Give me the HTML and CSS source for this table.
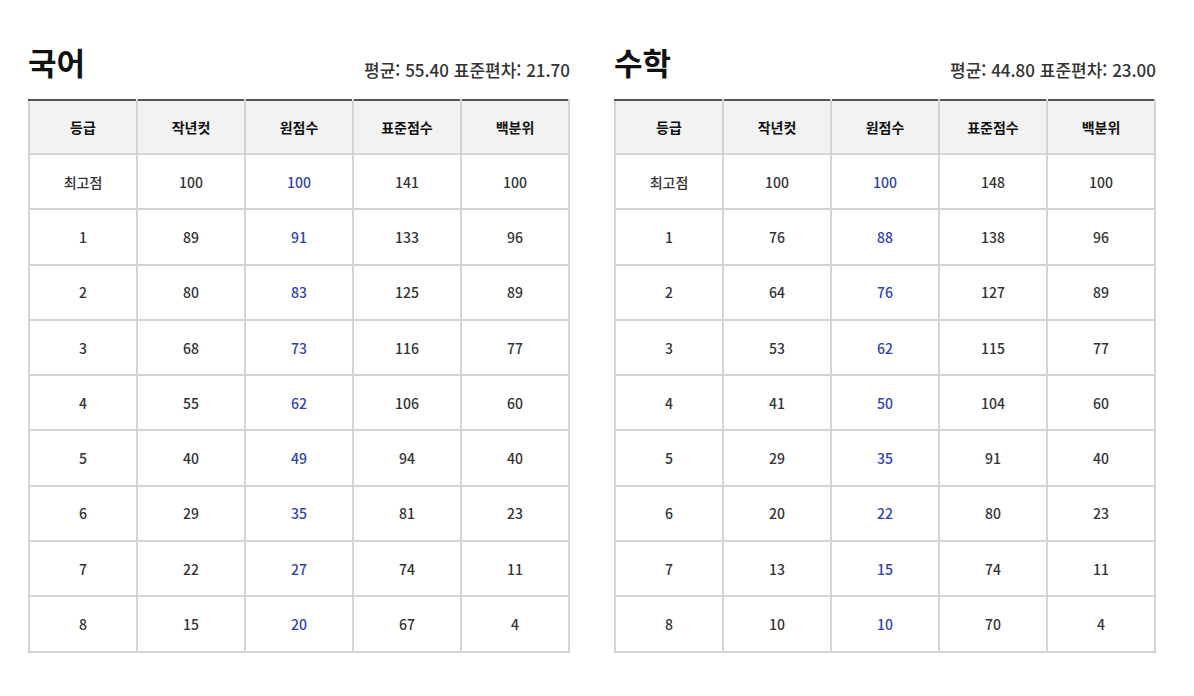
FILE: index.html
```html
<!DOCTYPE html>
<html lang="ko">
<head>
<meta charset="utf-8">
<link rel="stylesheet" href="styles.css">
</head>
<body>
<div class="page">
  <section class="panel">
    <div class="panel-head">
      <h2 class="title">국어</h2>
      <span class="stats">평균: 55.40 표준편차: 21.70</span>
    </div>
    <table class="grade-table">
      <thead>
        <tr><th>등급</th><th>작년컷</th><th>원점수</th><th>표준점수</th><th>백분위</th></tr>
      </thead>
      <tbody>
        <tr><td>최고점</td><td>100</td><td class="raw">100</td><td>141</td><td>100</td></tr>
        <tr><td>1</td><td>89</td><td class="raw">91</td><td>133</td><td>96</td></tr>
        <tr><td>2</td><td>80</td><td class="raw">83</td><td>125</td><td>89</td></tr>
        <tr><td>3</td><td>68</td><td class="raw">73</td><td>116</td><td>77</td></tr>
        <tr><td>4</td><td>55</td><td class="raw">62</td><td>106</td><td>60</td></tr>
        <tr><td>5</td><td>40</td><td class="raw">49</td><td>94</td><td>40</td></tr>
        <tr><td>6</td><td>29</td><td class="raw">35</td><td>81</td><td>23</td></tr>
        <tr><td>7</td><td>22</td><td class="raw">27</td><td>74</td><td>11</td></tr>
        <tr><td>8</td><td>15</td><td class="raw">20</td><td>67</td><td>4</td></tr>
      </tbody>
    </table>
  </section>
  <section class="panel">
    <div class="panel-head">
      <h2 class="title">수학</h2>
      <span class="stats">평균: 44.80 표준편차: 23.00</span>
    </div>
    <table class="grade-table">
      <thead>
        <tr><th>등급</th><th>작년컷</th><th>원점수</th><th>표준점수</th><th>백분위</th></tr>
      </thead>
      <tbody>
        <tr><td>최고점</td><td>100</td><td class="raw">100</td><td>148</td><td>100</td></tr>
        <tr><td>1</td><td>76</td><td class="raw">88</td><td>138</td><td>96</td></tr>
        <tr><td>2</td><td>64</td><td class="raw">76</td><td>127</td><td>89</td></tr>
        <tr><td>3</td><td>53</td><td class="raw">62</td><td>115</td><td>77</td></tr>
        <tr><td>4</td><td>41</td><td class="raw">50</td><td>104</td><td>60</td></tr>
        <tr><td>5</td><td>29</td><td class="raw">35</td><td>91</td><td>40</td></tr>
        <tr><td>6</td><td>20</td><td class="raw">22</td><td>80</td><td>23</td></tr>
        <tr><td>7</td><td>13</td><td class="raw">15</td><td>74</td><td>11</td></tr>
        <tr><td>8</td><td>10</td><td class="raw">10</td><td>70</td><td>4</td></tr>
      </tbody>
    </table>
  </section>
</div>
</body>
</html>
```

FILE: styles.css
```css
html, body {
  margin: 0;
  padding: 0;
  background: #ffffff;
}
body {
  font-family: "Noto Sans CJK KR", "Noto Sans", sans-serif;
  color: #222;
}
.page {
  display: flex;
  gap: 44px;
  padding: 40px 0 0 28px;
}
.panel {
  width: 542px;
}
.panel-head {
  display: flex;
  justify-content: space-between;
  align-items: flex-end;
  height: 44px;
  margin-bottom: 15px;
}
.title {
  margin: 0;
  font-size: 31px;
  font-weight: 700;
  line-height: 44px;
  color: #111;
}
.stats {
  font-size: 17px;
  font-weight: 500;
  color: #333;
  line-height: 20px;
  padding-bottom: 4px;
  letter-spacing: 0;
}
.grade-table {
  width: 100%;
  border-collapse: collapse;
  table-layout: fixed;
}
.grade-table th,
.grade-table td {
  border: 2px solid #d4d4d4;
  text-align: center;
  padding: 0;
  font-size: 14px;
}
.grade-table th {
  height: 52px;
  background: #f2f2f2;
  font-weight: 700;
  color: #111;
  border-top: 2px solid #555;
}
.grade-table td {
  height: 53.3px;
  color: #333;
  font-weight: 500;
}
.grade-table td.raw {
  color: #2f43b0;
}
```
